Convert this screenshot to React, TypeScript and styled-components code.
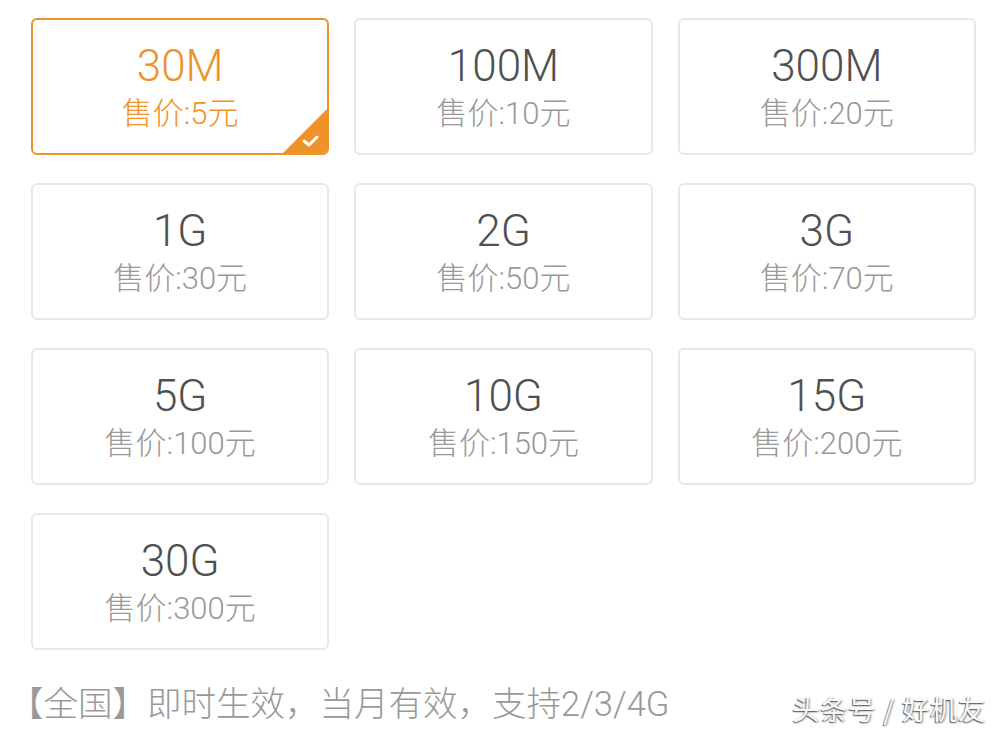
import React from "react"
import styled, { createGlobalStyle } from "styled-components"

const GlobalStyle = createGlobalStyle`
    html, body {
        margin: 0;
        padding: 0;
        background: #fff;
    }
    body {
        font-family: "Liberation Sans", "Noto Sans CJK SC", sans-serif;
    }
`

const Page = styled.div`
    position: relative;
    width: 1000px;
    height: 737px;
    overflow: hidden;
    padding: 18px 24px 0 31px;
    box-sizing: border-box;
`

const Grid = styled.div`
    width: 945px;
    display: grid;
    grid-template-columns: repeat(3, 1fr);
    grid-auto-rows: 137px;
    column-gap: 25px;
    row-gap: 28px;
`

const Card = styled.div<{ $active?: boolean }>`
    position: relative;
    box-sizing: border-box;
    border: 2px solid ${p => (p.$active ? "#f0922a" : "#e8e8e8")};
    border-radius: 6px;
    display: flex;
    flex-direction: column;
    align-items: center;
    justify-content: center;
    padding-top: 5px;
    overflow: hidden;
    color: ${p => (p.$active ? "#f0922a" : "#505050")};
`

const Size = styled.div`
    font-family: Roboto, "Liberation Sans", sans-serif;
    font-size: 44px;
    line-height: 48px;
    font-weight: 300;
`

const Price = styled.div<{ $active?: boolean }>`
    font-family: Roboto, "Noto Sans CJK SC", sans-serif;
    font-weight: 300;
    font-size: 31px;
    line-height: 44px;
    margin-top: 2px;
    color: ${p => (p.$active ? "#f0922a" : "#999")};
`

const Corner = styled.svg`
    position: absolute;
    right: 0;
    bottom: 0;
`

const Note = styled.p`
    margin: 34px 0 0 -22px;
    font-size: 34.5px;
    line-height: 40px;
    color: #999;
    font-family: Roboto, "Noto Sans CJK SC", sans-serif;
    font-weight: 300;
`

const Watermark = styled.div`
    position: absolute;
    right: 14px;
    bottom: 9px;
    font-size: 27px;
    letter-spacing: 1px;
    color: #fafafa;
    text-shadow: -1px 1px 1px #666, 1px 1px 2px #888;
    font-family: "Noto Sans CJK SC", sans-serif;
`

const plans = [
    { size: "30M", price: "5" },
    { size: "100M", price: "10" },
    { size: "300M", price: "20" },
    { size: "1G", price: "30" },
    { size: "2G", price: "50" },
    { size: "3G", price: "70" },
    { size: "5G", price: "100" },
    { size: "10G", price: "150" },
    { size: "15G", price: "200" },
    { size: "30G", price: "300" },
]

export default function App() {
    return (
        <Page>
            <GlobalStyle />
            <Grid>
                {plans.map((plan, i) => (
                    <Card key={plan.size} $active={i === 0}>
                        <Size>{plan.size}</Size>
                        <Price $active={i === 0}>售价:{plan.price}元</Price>
                        {i === 0 && (
                            <Corner width="44" height="44" viewBox="0 0 44 44">
                                <polygon points="44,0 44,44 0,44" fill="#f0922a" />
                                <polyline
                                    points="21,32 26,36 34,28"
                                    fill="none"
                                    stroke="#fff"
                                    strokeWidth="3"
                                    strokeLinecap="round"
                                    strokeLinejoin="round"
                                />
                            </Corner>
                        )}
                    </Card>
                ))}
            </Grid>
            <Note>【全国】即时生效，当月有效，支持2/3/4G</Note>
            <Watermark>头条号 / 好机友</Watermark>
        </Page>
    )
}
